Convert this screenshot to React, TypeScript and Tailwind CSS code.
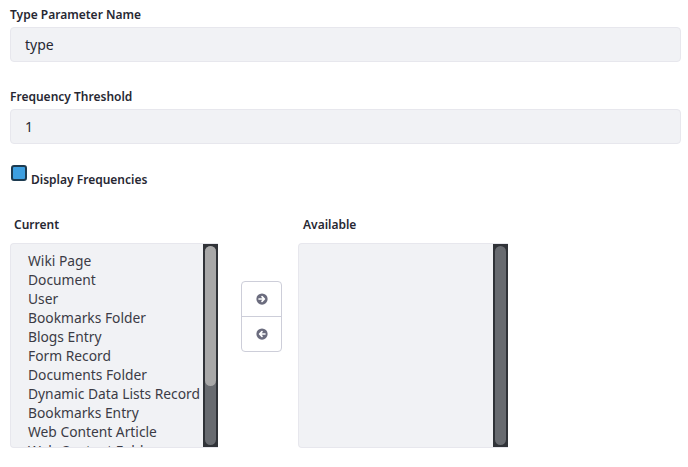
import React from 'react'

const current = [
  'Wiki Page',
  'Document',
  'User',
  'Bookmarks Folder',
  'Blogs Entry',
  'Form Record',
  'Documents Folder',
  'Dynamic Data Lists Record',
  'Bookmarks Entry',
  'Web Content Article',
  'Web Content Folder',
]

function ArrowCircle({ dir }: { dir: 'right' | 'left' }) {
  return (
    <svg width="12" height="12" viewBox="0 0 16 16">
      <circle cx="8" cy="8" r="7.5" fill="#6b6c7e" />
      {dir === 'right' ? (
        <path d="M4 8h7M8 4.8 11.2 8 8 11.2" stroke="#fff" strokeWidth="2.2" fill="none" strokeLinecap="round" strokeLinejoin="round" />
      ) : (
        <path d="M12 8H5M8 4.8 4.8 8 8 11.2" stroke="#fff" strokeWidth="2.2" fill="none" strokeLinecap="round" strokeLinejoin="round" />
      )}
    </svg>
  )
}

function Scrollbar({ thumb }: { thumb?: number }) {
  return (
    <div className="w-[15px] shrink-0 bg-[#303338] p-[2px]">
      <div className="relative h-full rounded-full bg-[#686b70]">
        {thumb ? (
          <div className="absolute left-0 right-0 top-0 rounded-full bg-[#a8a8a8]" style={{ height: thumb }} />
        ) : null}
      </div>
    </div>
  )
}

export default function App() {
  return (
    <div className="w-[688px] h-[467px] overflow-hidden bg-white px-[10px] pt-[6px] font-['Noto_Sans',sans-serif] text-[#272833]">
      <label className="block text-[12px] font-semibold leading-[18px]">Type Parameter Name</label>
      <div className="mt-[3px] h-[35px] w-[671px] rounded-[4px] border border-[#e7e7ed] bg-[#f1f2f5] px-[14px] text-[14px] leading-[33px]">
        type
      </div>

      <label className="mt-[26px] block text-[12px] font-semibold leading-[18px]">Frequency Threshold</label>
      <div className="mt-[3px] h-[35px] w-[671px] rounded-[4px] border border-[#e7e7ed] bg-[#f1f2f5] px-[14px] text-[14px] leading-[33px]">
        1
      </div>

      <div className="mt-[21px] flex items-start gap-[4px]">
        <span className="ml-[1px] h-[16px] w-[16px] rounded-[3px] border-2 border-[#1d3b50] bg-[#3d9fe0]" />
        <span className="pt-[6px] text-[12px] font-semibold leading-[18px]">Display Frequencies</span>
      </div>

      <div className="mt-[27px] flex">
        <div className="w-[208px]">
          <div className="pl-[4px] text-[12px] font-semibold leading-[18px]">Current</div>
          <div className="mt-[9px] flex h-[205px] overflow-hidden rounded-l-[4px] border border-r-0 border-[#e7e7ed] bg-[#f1f2f5]">
            <ul className="flex-1 overflow-hidden pl-[17px] pt-[7px] text-[13.8px] leading-[19px] text-[#3b3b45]">
              {current.map((c) => (
                <li key={c} className="whitespace-nowrap">{c}</li>
              ))}
            </ul>
            <Scrollbar thumb={140} />
          </div>
        </div>

        <div className="ml-[23px] mt-[65px] flex h-[71px] w-[41px] flex-col rounded-[4px] border border-[#cdced9] bg-white">
          <button className="flex h-[35px] items-center justify-center border-b border-[#cdced9]">
            <ArrowCircle dir="right" />
          </button>
          <button className="flex flex-1 items-center justify-center">
            <ArrowCircle dir="left" />
          </button>
        </div>

        <div className="ml-[16px] w-[210px]">
          <div className="pl-[5px] text-[12px] font-semibold leading-[18px]">Available</div>
          <div className="mt-[9px] flex h-[205px] overflow-hidden rounded-l-[4px] border border-r-0 border-[#e7e7ed] bg-[#f1f2f5]">
            <div className="flex-1" />
            <Scrollbar />
          </div>
        </div>
      </div>
    </div>
  )
}
